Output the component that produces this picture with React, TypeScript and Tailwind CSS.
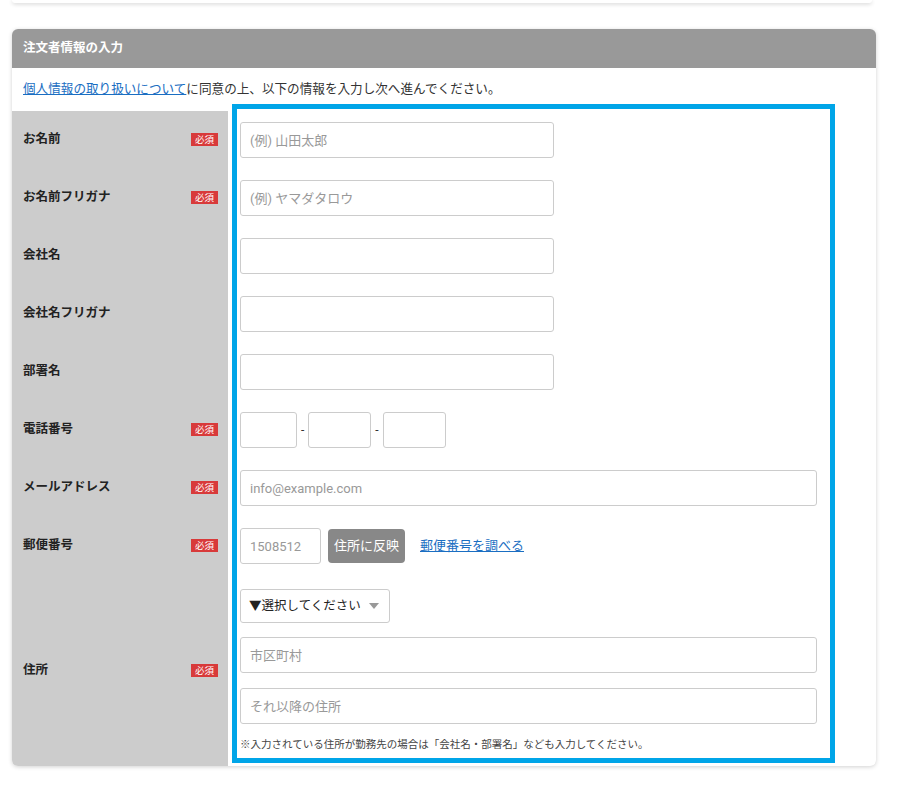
import { ReactNode } from "react";

function Badge() {
    return (
        <span className="inline-flex h-[13px] w-[27px] items-center justify-center bg-[#d83a3a] text-[9.5px] leading-none text-white">
            必須
        </span>
    );
}

function Row({ label, required, children }: { label: string; required?: boolean; children: ReactNode }) {
    return (
        <>
            <div className="flex h-[58px] items-center justify-between bg-[#cccccc] pb-[1px] pl-[11px] pr-[10px]">
                <span className="text-[12.5px] font-bold text-[#222]">{label}</span>
                {required && <Badge />}
            </div>
            <div className="flex h-[58px] items-center pl-[12px]">{children}</div>
        </>
    );
}

const inputCls =
    "h-[36px] rounded-[3px] border border-[#cccccc] bg-white px-[9px] text-[13px] text-[#333] outline-none placeholder:text-[#999]";

export default function App() {
    return (
        <div className="relative min-h-[789px] bg-white font-[Roboto,'Noto_Sans_CJK_JP',sans-serif]">
            {/* previous card edge */}
            <div className="ml-[12px] h-[3px] w-[860px] rounded-b-[6px] bg-white shadow-[0_1px_4px_rgba(0,0,0,0.2)]" />

            <div className="ml-[12px] mt-[26px] w-[864px] overflow-hidden rounded-[6px] bg-white shadow-[0_1px_4px_rgba(0,0,0,0.18)]">
                <div className="flex h-[39px] items-center bg-[#999999] px-[11px] text-[12.5px] font-bold text-white">
                    注文者情報の入力
                </div>
                <div className="flex h-[43px] items-center px-[11px] text-[12.6px] text-[#333]">
                    <a href="#" className="text-[#1a6ec2] underline">個人情報の取り扱いについて</a>
                    に同意の上、以下の情報を入力し次へ進んでください。
                </div>

                <div className="grid grid-cols-[216px_1fr]">
                    <Row label="お名前" required>
                        <input className={inputCls + " w-[314px]"} placeholder="(例) 山田太郎" />
                    </Row>
                    <Row label="お名前フリガナ" required>
                        <input className={inputCls + " w-[314px]"} placeholder="(例) ヤマダタロウ" />
                    </Row>
                    <Row label="会社名">
                        <input className={inputCls + " w-[314px]"} />
                    </Row>
                    <Row label="会社名フリガナ">
                        <input className={inputCls + " w-[314px]"} />
                    </Row>
                    <Row label="部署名">
                        <input className={inputCls + " w-[314px]"} />
                    </Row>
                    <Row label="電話番号" required>
                        <div className="flex items-center gap-[4px] text-[12px] text-[#333]">
                            <input className={inputCls + " w-[57px]"} />
                            <span>-</span>
                            <input className={inputCls + " w-[63px]"} />
                            <span>-</span>
                            <input className={inputCls + " w-[63px]"} />
                        </div>
                    </Row>
                    <Row label="メールアドレス" required>
                        <input className={inputCls + " w-[577px]"} placeholder="info@example.com" />
                    </Row>
                    <Row label="郵便番号" required>
                        <div className="flex items-center">
                            <input className={inputCls + " w-[81px]"} placeholder="1508512" />
                            <button className="ml-[7px] h-[34px] w-[77px] rounded-[4px] bg-[#888888] text-[13px] text-white">
                                住所に反映
                            </button>
                            <a href="#" className="ml-[15px] text-[13px] text-[#1a6ec2] underline">郵便番号を調べる</a>
                        </div>
                    </Row>

                    {/* address */}
                    <div className="flex items-center justify-between bg-[#cccccc] pl-[11px] pr-[10px]">
                        <span className="text-[12.5px] font-bold text-[#222]">住所</span>
                        <Badge />
                    </div>
                    <div className="flex flex-col items-start pb-[14px] pl-[12px] pt-[14px]">
                        <div className="flex h-[34px] w-[150px] items-center justify-between rounded-[3px] border border-[#cccccc] pl-[8px] pr-[10px] text-[12.5px] text-[#222]">
                            <span>▼選択してください</span>
                            <svg width="10" height="6" viewBox="0 0 10 6">
                                <path d="M0 0h10L5 6z" fill="#999" />
                            </svg>
                        </div>
                        <input className={inputCls + " mt-[14px] w-[577px]"} placeholder="市区町村" />
                        <input className={inputCls + " mt-[15px] w-[577px]"} placeholder="それ以降の住所" />
                        <p className="mt-[14px] text-[10.5px] leading-[14px] text-[#444]">
                            ※入力されている住所が勤務先の場合は「会社名・部署名」なども入力してください。
                        </p>
                    </div>
                </div>
            </div>

            {/* highlight frame */}
            <div className="pointer-events-none absolute left-[232px] top-[104px] h-[659px] w-[603px] border-[5px] border-[#00a5e8]" />
        </div>
    );
}
